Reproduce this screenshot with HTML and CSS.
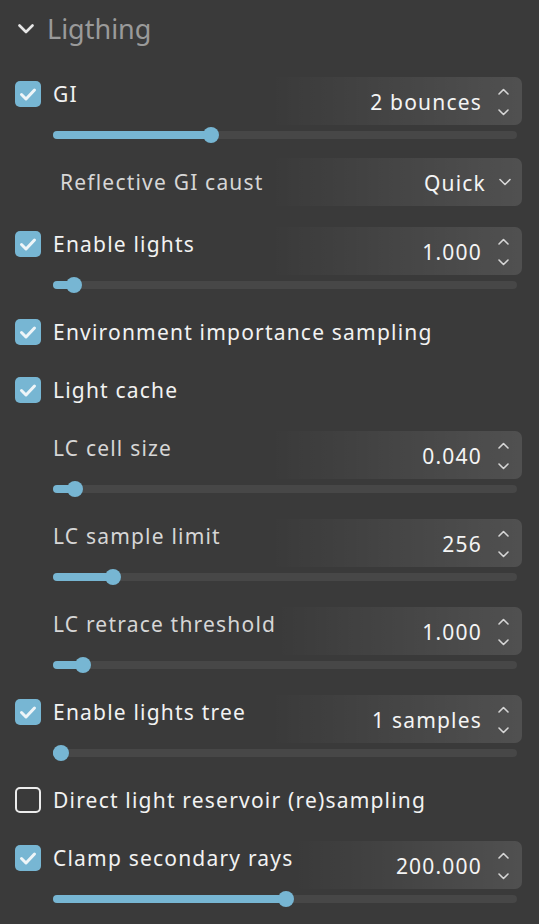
FILE: index.html
```html
<!DOCTYPE html>
<html>
<head>
<meta charset="utf-8">
<link rel="stylesheet" href="styles.css">
</head>
<body>
<div class="panel">
  <div class="header">
    <svg class="hchev" width="16" height="10" viewBox="0 0 16 10"><path d="M1.5 1.5 L8 8 L14.5 1.5" fill="none" stroke="#e6e6e6" stroke-width="2.6" stroke-linecap="round" stroke-linejoin="round"/></svg>
    <span class="title">Ligthing</span>
  </div>

  <div class="group">
    <div class="field">
      <div class="lbl"><span class="cb on"><svg width="26" height="26" viewBox="0 0 26 26"><path d="M6.5 13.5 L11 18 L19.5 9" fill="none" stroke="#eef5f8" stroke-width="3" stroke-linecap="round" stroke-linejoin="round"/></svg></span>GI</div>
      <div class="box"><span class="val">2 bounces</span><span class="spin"><svg width="11" height="28" viewBox="0 0 11 28"><path d="M1 6 L5.5 1.5 L10 6" fill="none" stroke="#d6d6d6" stroke-width="1.6" stroke-linecap="round" stroke-linejoin="round"/><path d="M1 22 L5.5 26.5 L10 22" fill="none" stroke="#d6d6d6" stroke-width="1.6" stroke-linecap="round" stroke-linejoin="round"/></svg></span></div>
    </div>
    <div class="track"><div class="fill" style="width:158px"></div><div class="thumb" style="left:150px"></div></div>
  </div>

  <div class="field drop-row">
    <div class="sub">Reflective GI caust</div>
    <div class="box"><span class="val">Quick</span><span class="dchev"><svg width="12" height="8" viewBox="0 0 12 8"><path d="M1 1.5 L6 6.5 L11 1.5" fill="none" stroke="#d6d6d6" stroke-width="1.6" stroke-linecap="round" stroke-linejoin="round"/></svg></span></div>
  </div>

  <div class="group">
    <div class="field">
      <div class="lbl"><span class="cb on"><svg width="26" height="26" viewBox="0 0 26 26"><path d="M6.5 13.5 L11 18 L19.5 9" fill="none" stroke="#eef5f8" stroke-width="3" stroke-linecap="round" stroke-linejoin="round"/></svg></span>Enable lights</div>
      <div class="box"><span class="val">1.000</span><span class="spin"><svg width="11" height="28" viewBox="0 0 11 28"><path d="M1 6 L5.5 1.5 L10 6" fill="none" stroke="#d6d6d6" stroke-width="1.6" stroke-linecap="round" stroke-linejoin="round"/><path d="M1 22 L5.5 26.5 L10 22" fill="none" stroke="#d6d6d6" stroke-width="1.6" stroke-linecap="round" stroke-linejoin="round"/></svg></span></div>
    </div>
    <div class="track"><div class="fill" style="width:21px"></div><div class="thumb" style="left:13px"></div></div>
  </div>

  <div class="check-row">
    <div class="lbl"><span class="cb on"><svg width="26" height="26" viewBox="0 0 26 26"><path d="M6.5 13.5 L11 18 L19.5 9" fill="none" stroke="#eef5f8" stroke-width="3" stroke-linecap="round" stroke-linejoin="round"/></svg></span>Environment importance sampling</div>
  </div>

  <div class="check-row">
    <div class="lbl"><span class="cb on"><svg width="26" height="26" viewBox="0 0 26 26"><path d="M6.5 13.5 L11 18 L19.5 9" fill="none" stroke="#eef5f8" stroke-width="3" stroke-linecap="round" stroke-linejoin="round"/></svg></span>Light cache</div>
  </div>

  <div class="group">
    <div class="field">
      <div class="lbl sub-lbl">LC cell size</div>
      <div class="box"><span class="val">0.040</span><span class="spin"><svg width="11" height="28" viewBox="0 0 11 28"><path d="M1 6 L5.5 1.5 L10 6" fill="none" stroke="#d6d6d6" stroke-width="1.6" stroke-linecap="round" stroke-linejoin="round"/><path d="M1 22 L5.5 26.5 L10 22" fill="none" stroke="#d6d6d6" stroke-width="1.6" stroke-linecap="round" stroke-linejoin="round"/></svg></span></div>
    </div>
    <div class="track"><div class="fill" style="width:22px"></div><div class="thumb" style="left:14px"></div></div>
  </div>

  <div class="group">
    <div class="field">
      <div class="lbl sub-lbl">LC sample limit</div>
      <div class="box"><span class="val">256</span><span class="spin"><svg width="11" height="28" viewBox="0 0 11 28"><path d="M1 6 L5.5 1.5 L10 6" fill="none" stroke="#d6d6d6" stroke-width="1.6" stroke-linecap="round" stroke-linejoin="round"/><path d="M1 22 L5.5 26.5 L10 22" fill="none" stroke="#d6d6d6" stroke-width="1.6" stroke-linecap="round" stroke-linejoin="round"/></svg></span></div>
    </div>
    <div class="track"><div class="fill" style="width:60px"></div><div class="thumb" style="left:52px"></div></div>
  </div>

  <div class="group">
    <div class="field">
      <div class="lbl sub-lbl">LC retrace threshold</div>
      <div class="box"><span class="val">1.000</span><span class="spin"><svg width="11" height="28" viewBox="0 0 11 28"><path d="M1 6 L5.5 1.5 L10 6" fill="none" stroke="#d6d6d6" stroke-width="1.6" stroke-linecap="round" stroke-linejoin="round"/><path d="M1 22 L5.5 26.5 L10 22" fill="none" stroke="#d6d6d6" stroke-width="1.6" stroke-linecap="round" stroke-linejoin="round"/></svg></span></div>
    </div>
    <div class="track"><div class="fill" style="width:30px"></div><div class="thumb" style="left:22px"></div></div>
  </div>

  <div class="group">
    <div class="field">
      <div class="lbl"><span class="cb on"><svg width="26" height="26" viewBox="0 0 26 26"><path d="M6.5 13.5 L11 18 L19.5 9" fill="none" stroke="#eef5f8" stroke-width="3" stroke-linecap="round" stroke-linejoin="round"/></svg></span>Enable lights tree</div>
      <div class="box"><span class="val">1 samples</span><span class="spin"><svg width="11" height="28" viewBox="0 0 11 28"><path d="M1 6 L5.5 1.5 L10 6" fill="none" stroke="#d6d6d6" stroke-width="1.6" stroke-linecap="round" stroke-linejoin="round"/><path d="M1 22 L5.5 26.5 L10 22" fill="none" stroke="#d6d6d6" stroke-width="1.6" stroke-linecap="round" stroke-linejoin="round"/></svg></span></div>
    </div>
    <div class="track"><div class="fill" style="width:8px"></div><div class="thumb" style="left:0px"></div></div>
  </div>

  <div class="check-row">
    <div class="lbl"><span class="cb off"></span>Direct light reservoir (re)sampling</div>
  </div>

  <div class="group">
    <div class="field">
      <div class="lbl"><span class="cb on"><svg width="26" height="26" viewBox="0 0 26 26"><path d="M6.5 13.5 L11 18 L19.5 9" fill="none" stroke="#eef5f8" stroke-width="3" stroke-linecap="round" stroke-linejoin="round"/></svg></span>Clamp secondary rays</div>
      <div class="box"><span class="val">200.000</span><span class="spin"><svg width="11" height="28" viewBox="0 0 11 28"><path d="M1 6 L5.5 1.5 L10 6" fill="none" stroke="#d6d6d6" stroke-width="1.6" stroke-linecap="round" stroke-linejoin="round"/><path d="M1 22 L5.5 26.5 L10 22" fill="none" stroke="#d6d6d6" stroke-width="1.6" stroke-linecap="round" stroke-linejoin="round"/></svg></span></div>
    </div>
    <div class="track"><div class="fill" style="width:233px"></div><div class="thumb" style="left:225px"></div></div>
  </div>
</div>
</body>
</html>
```

FILE: styles.css
```css
html, body {
  margin: 0;
  padding: 0;
  background: #3a3a3a;
}
body {
  width: 539px;
  height: 924px;
  overflow: hidden;
  font-family: "Noto Sans", "Open Sans", sans-serif;
  font-size: 21px;
  letter-spacing: 1.2px;
  color: #f2f2f2;
}
.panel {
  display: flex;
  flex-direction: column;
  gap: 26px;
  padding-left: 15px;
  padding-right: 17px;
}
.header {
  height: 51px;
  padding-top: 5px;
  box-sizing: border-box;
  display: flex;
  align-items: center;
  gap: 13px;
}
.hchev {
  margin-left: 3px;
  margin-top: 1px;
}
.title {
  font-size: 27px;
  letter-spacing: 0;
  color: #9a9a9a;
  line-height: 1;
}
.group {
  display: flex;
  flex-direction: column;
  gap: 6px;
}
.field {
  height: 48px;
  display: flex;
  align-items: flex-start;
}
.lbl {
  display: flex;
  align-items: center;
  gap: 12px;
  height: 26px;
  margin-top: 4px;
  line-height: 26px;
  white-space: nowrap;
}
.sub-lbl {
  padding-left: 38px;
  color: #d6d6d6;
}
.cb {
  width: 26px;
  height: 26px;
  border-radius: 5px;
  box-sizing: border-box;
  flex: none;
  display: block;
}
.cb svg { display: block; }
.cb.on { background: #77b6d3; }
.cb.off { border: 2px solid #ececec; }
.box {
  margin-left: auto;
  width: 252px;
  height: 48px;
  box-sizing: border-box;
  border-radius: 7px;
  background: linear-gradient(90deg, rgba(255,255,255,0) 0%, rgba(255,255,255,0.04) 35%, rgba(255,255,255,0.115) 100%);
  display: flex;
  align-items: center;
  justify-content: flex-end;
  padding-right: 13px;
  gap: 16px;
}
.val {
  line-height: 1;
  color: #f4f4f4;
  padding-top: 2px;
}
.spin svg, .dchev svg { display: block; }
.spin { margin-top: 1px; }
.drop-row {
  margin-top: -7px;
  margin-bottom: -5px;
  align-items: center;
}
.drop-row .box {
  padding-right: 11px;
  gap: 13px;
}
.sub {
  padding-left: 45px;
  color: #d6d6d6;
  white-space: nowrap;
}
.check-row {
  height: 30px;
  margin-top: 2px;
  display: flex;
  align-items: center;
}
.check-row .lbl { margin-top: 0; }
.track {
  position: relative;
  margin-left: 38px;
  width: 464px;
  height: 8px;
  border-radius: 4px;
  background: #474747;
}
.fill {
  position: absolute;
  left: 0;
  top: 0;
  height: 8px;
  border-radius: 4px;
  background: #77b6d3;
}
.thumb {
  position: absolute;
  top: -4px;
  width: 16px;
  height: 16px;
  border-radius: 50%;
  background: #77b6d3;
}
```
